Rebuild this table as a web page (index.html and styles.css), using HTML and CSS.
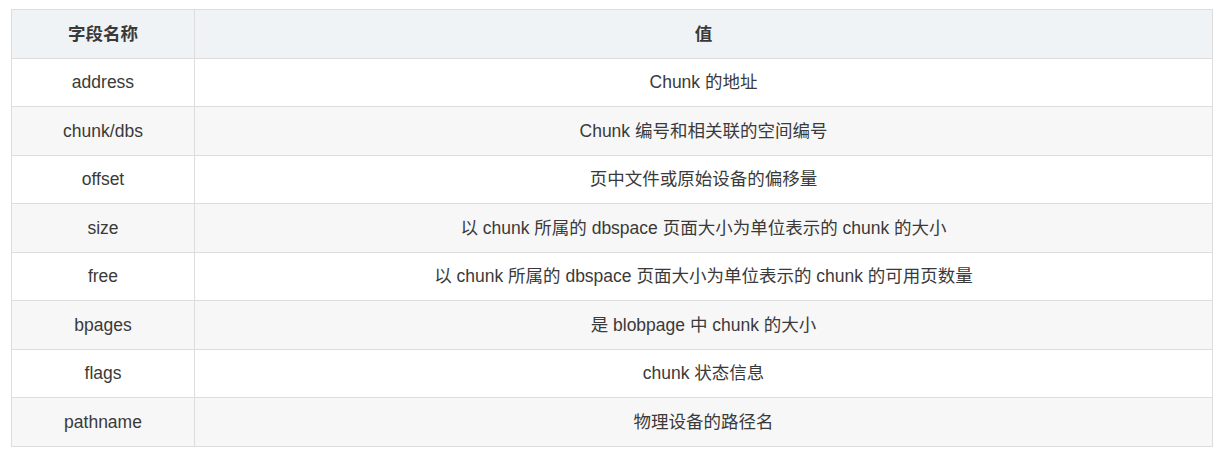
FILE: index.html
```html
<!DOCTYPE html>
<html lang="zh-CN">
<head>
<meta charset="utf-8">
<title>chunk</title>
<link rel="stylesheet" href="styles.css">
</head>
<body>
<table class="tbl">
  <thead>
    <tr><th class="c1">字段名称</th><th>值</th></tr>
  </thead>
  <tbody>
    <tr><td class="c1">address</td><td>Chunk 的地址</td></tr>
    <tr><td class="c1">chunk/dbs</td><td>Chunk 编号和相关联的空间编号</td></tr>
    <tr><td class="c1">offset</td><td>页中文件或原始设备的偏移量</td></tr>
    <tr><td class="c1">size</td><td>以 chunk 所属的 dbspace 页面大小为单位表示的 chunk 的大小</td></tr>
    <tr><td class="c1">free</td><td>以 chunk 所属的 dbspace 页面大小为单位表示的 chunk 的可用页数量</td></tr>
    <tr><td class="c1">bpages</td><td>是 blobpage 中 chunk 的大小</td></tr>
    <tr><td class="c1">flags</td><td>chunk 状态信息</td></tr>
    <tr><td class="c1">pathname</td><td>物理设备的路径名</td></tr>
  </tbody>
</table>
</body>
</html>
```

FILE: styles.css
```css
html, body {
  margin: 0;
  padding: 0;
  background: #ffffff;
}
body {
  padding: 9px 0 0 11px;
  font-family: "Liberation Sans", "Noto Sans CJK SC", sans-serif;
  font-size: 17.5px;
  color: #3a3a3a;
}
.tbl {
  width: 1202px;
  border-collapse: collapse;
  table-layout: fixed;
}
.tbl th, .tbl td {
  border: 1px solid #dddddd;
  text-align: center;
  vertical-align: middle;
  height: 47.5px;
  padding: 0 8px;
  line-height: 24px;
}
.tbl th {
  background: #eff3f6;
  font-weight: bold;
}
.tbl .c1 {
  width: 166px;
}
.tbl tbody tr:nth-child(even) td {
  background: #f7f7f7;
}
```
